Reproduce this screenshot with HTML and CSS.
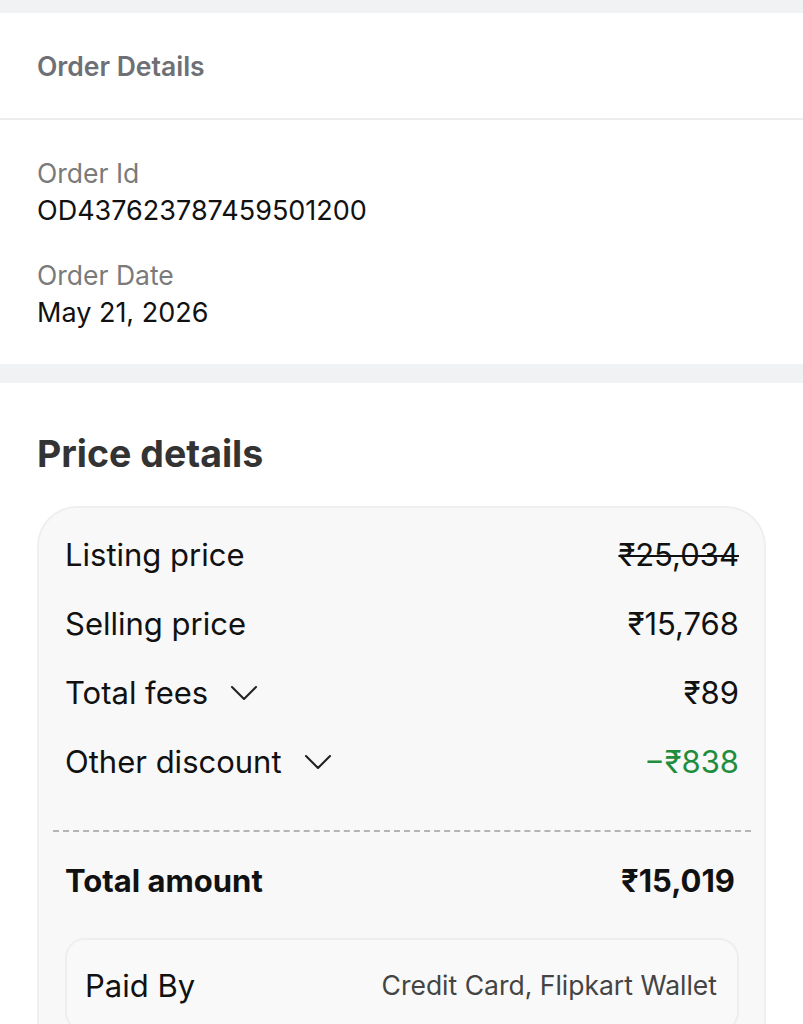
FILE: index.html
```html
<!doctype html>
<html lang="en">
    <head>
        <meta charset="UTF-8" />
        <meta name="viewport" content="width=device-width, initial-scale=1.0" />
        <title>Order Details</title>
        <link rel="stylesheet" href="styles.css">
    </head>
    <body>
        <div class="gap gap-top"></div>

        <section class="order-section">
            <div class="order-header">
                <h2>Order Details</h2>
            </div>
            <div class="order-info">
                <div class="info-item">
                    <div class="info-label">Order Id</div>
                    <div class="info-value">OD437623787459501200</div>
                </div>
                <div class="info-item">
                    <div class="info-label">Order Date</div>
                    <div class="info-value">May 21, 2026</div>
                </div>
            </div>
        </section>

        <div class="gap"></div>

        <section class="price-section">
            <h1>Price details</h1>

            <div class="price-card">
                <div class="price-row">
                    <span>Listing price</span>
                    <span class="strike">₹25,034</span>
                </div>
                <div class="price-row">
                    <span>Selling price</span>
                    <span>₹15,768</span>
                </div>
                <div class="price-row">
                    <span class="toggle">
                        Total fees
                        <svg width="28" height="28" viewBox="0 0 28 28" fill="none" stroke="#222" stroke-width="2.1" stroke-linecap="round" stroke-linejoin="round"><path d="M2 8l12 12 12-12" /></svg>
                    </span>
                    <span>₹89</span>
                </div>
                <div class="price-row">
                    <span class="toggle">
                        Other discount
                        <svg width="28" height="28" viewBox="0 0 28 28" fill="none" stroke="#222" stroke-width="2.1" stroke-linecap="round" stroke-linejoin="round"><path d="M2 8l12 12 12-12" /></svg>
                    </span>
                    <span class="discount">−₹838</span>
                </div>

                <div class="divider"></div>

                <div class="total-row">
                    <span>Total amount</span>
                    <span>₹15,019</span>
                </div>

                <div class="paid-card">
                    <span>Paid By</span>
                    <span class="paid-method">Credit Card, Flipkart Wallet</span>
                </div>
            </div>
        </section>
    </body>
</html>
```

FILE: styles.css
```css
body {
    margin: 0;
    font-family: Inter, 'Noto Sans', sans-serif;
    background: #ffffff;
    color: #111;
}

.gap {
    height: 19px;
    background: #f1f2f4;
}

.gap-top {
    height: 13px;
}

.order-header {
    height: 105px;
    display: flex;
    align-items: center;
    padding: 0 37px;
    border-bottom: 2px solid #ededed;
}

.order-header h2 {
    margin: 0;
    font-size: 26.5px;
    font-weight: 600;
    color: #6e7076;
}

.order-info {
    padding: 34px 37px 32px;
}

.info-item + .info-item {
    margin-top: 26px;
}

.info-label {
    font-size: 26.5px;
    line-height: 38px;
    color: #7a7a7a;
}

.info-value {
    font-size: 27px;
    line-height: 38px;
    color: #111;
}

.price-section {
    padding: 48px 37px 0;
}

.price-section h1 {
    margin: 0 0 30px;
    font-size: 37.5px;
    font-weight: 700;
    color: #333;
}

.price-card {
    background: #f8f8f8;
    border: 2px solid #efefef;
    border-bottom: none;
    border-radius: 40px 40px 0 0;
    padding: 12px 25px 0 26px;
}

.price-row {
    display: flex;
    justify-content: space-between;
    align-items: center;
    height: 69px;
    font-size: 31px;
    color: #111;
}

.toggle {
    display: flex;
    align-items: center;
    gap: 22px;
}

.strike {
    text-decoration: line-through;
    text-decoration-thickness: 2px;
}

.discount {
    color: #1e8e3e;
}

.divider {
    margin: 34px -12px 0 -12px;
    border-top: 2px dashed #b5b5b5;
}

.total-row {
    display: flex;
    justify-content: space-between;
    align-items: center;
    height: 96px;
    padding-right: 4px;
    font-size: 31px;
    font-weight: 700;
    color: #111;
}

.paid-card {
    margin-top: 10px;
    display: flex;
    justify-content: space-between;
    align-items: center;
    height: 90px;
    padding: 0 20px 0 18px;
    background: #f9f9f9;
    border: 2px solid #eeeeee;
    border-radius: 20px;
    font-size: 31px;
    color: #111;
}

.paid-method {
    font-size: 26.5px;
    color: #444;
}
```
